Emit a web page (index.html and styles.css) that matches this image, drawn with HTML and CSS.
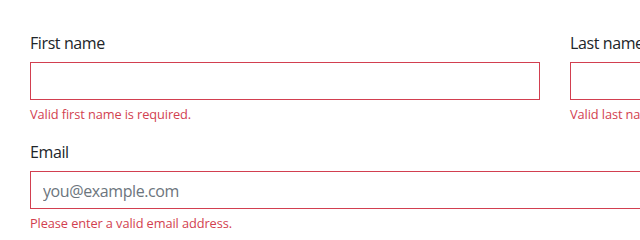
FILE: index.html
```html
<!DOCTYPE html>
<html lang="en">
<head>
<meta charset="utf-8">
<title>Checkout form</title>
<link rel="stylesheet" href="styles.css">
</head>
<body>
<form class="form" novalidate>
  <div class="row">
    <div class="field">
      <label class="label" for="firstName">First name</label>
      <input class="input" id="firstName" type="text">
      <div class="feedback">Valid first name is required.</div>
    </div>
    <div class="field">
      <label class="label" for="lastName">Last name</label>
      <input class="input" id="lastName" type="text">
      <div class="feedback">Valid last name is required.</div>
    </div>
  </div>
  <div class="field field-full">
    <label class="label" for="email">Email</label>
    <input class="input" id="email" type="email" placeholder="you@example.com">
    <div class="feedback">Please enter a valid email address.</div>
  </div>
</form>
</body>
</html>
```

FILE: styles.css
```css
html, body {
  margin: 0;
  padding: 0;
  background: #fff;
  overflow: hidden;
}
body {
  font-family: "Open Sans", "Noto Sans", sans-serif;
  font-size: 16px;
  line-height: 1.5;
  color: #212529;
}
.form {
  padding: 30px 0 0 30px;
  width: 1050px;
}
.row {
  display: grid;
  grid-template-columns: 510px 510px;
  column-gap: 30px;
}
.field {
  display: flex;
  flex-direction: column;
  margin-bottom: 16px;
}
.field-full {
  width: 1050px;
}
.label {
  display: block;
  padding-top: 1px;
  margin-bottom: 7px;
  line-height: 24px;
  letter-spacing: -0.4px;
}
.input {
  box-sizing: border-box;
  height: 38px;
  width: 100%;
  margin: 0;
  padding: 7px 12px 5px;
  font: inherit;
  font-size: 16px;
  line-height: 24px;
  letter-spacing: -0.4px;
  color: #495057;
  background: #fff;
  border: 1px solid #d23f50;
  border-radius: 0;
  outline: none;
}
.input::placeholder {
  color: #6c757d;
  opacity: 1;
}
.feedback {
  margin-top: 4px;
  padding-top: 1px;
  margin-bottom: -1px;
  font-size: 12.8px;
  line-height: 19.2px;
  letter-spacing: -0.1px;
  color: #d23f50;
}
```
